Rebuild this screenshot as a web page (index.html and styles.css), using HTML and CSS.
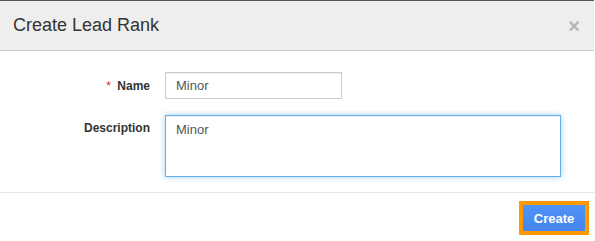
FILE: index.html
```html
<!DOCTYPE html>
<html lang="en">
<head>
    <meta charset="UTF-8">
    <meta name="viewport" content="width=device-width, initial-scale=1.0">
    <title>Create Lead Rank</title>
    <link rel="stylesheet" href="styles.css">
</head>
<body>
    <div class="modal">
        <div class="modal-header">
            <h4 class="modal-title">Create Lead Rank</h4>
            <button class="close" type="button">&times;</button>
        </div>
        <div class="modal-body">
            <div class="form-row">
                <label for="rank-name"><span class="required">*</span> Name</label>
                <input type="text" id="rank-name" class="name-input" value="Minor">
            </div>
            <div class="form-row top">
                <label for="rank-desc">Description</label>
                <textarea id="rank-desc" class="desc-input">Minor</textarea>
            </div>
        </div>
        <div class="modal-footer">
            <button class="create-button" type="button">Create</button>
        </div>
    </div>
</body>
</html>
```

FILE: styles.css
```css
body {
    margin: 0;
    font-family: "Liberation Sans", Arial, sans-serif;
    font-size: 13px;
    color: #333;
    background-color: #fff;
}

.modal {
    border-top: 1px solid #555;
    width: 594px;
}

.modal-header {
    display: flex;
    align-items: center;
    justify-content: space-between;
    height: 49px;
    padding: 0 14px 0 13px;
    background-color: #eee;
    border-bottom: 1px solid #ccc;
}

.modal-title {
    margin: 0;
    font-size: 18px;
    font-weight: normal;
    color: #333;
}

.close {
    padding: 0;
    border: none;
    background: none;
    font-family: "Liberation Sans", Arial, sans-serif;
    font-size: 20px;
    font-weight: bold;
    line-height: 1;
    color: #b5b5b5;
    cursor: pointer;
}

.modal-body {
    padding: 21px 34px 15px 0;
}

.form-row {
    display: grid;
    grid-template-columns: 150px 1fr;
    column-gap: 15px;
    align-items: center;
}

.form-row.top {
    align-items: start;
    margin-top: 16px;
}

.form-row label {
    text-align: right;
    font-size: 12px;
    font-weight: bold;
    color: #333;
}

.form-row.top label {
    padding-top: 6px;
}

.required {
    color: #e02b27;
    margin-right: 3px;
    font-weight: normal;
}

.name-input,
.desc-input {
    box-sizing: border-box;
    padding: 4px 10px;
    font-family: "Liberation Sans", Arial, sans-serif;
    font-size: 13px;
    color: #555;
    background-color: #fff;
    border: 1px solid #ccc;
    border-radius: 0;
    box-shadow: inset 0 1px 1px rgba(0, 0, 0, 0.075);
    outline: none;
}

.name-input {
    width: 177px;
    height: 27px;
}

.desc-input {
    width: 396px;
    height: 62px;
    padding-top: 6px;
    resize: none;
    border-color: #66afe9;
    box-shadow: inset 0 1px 1px rgba(0, 0, 0, 0.075), 0 0 6px rgba(102, 175, 233, 0.6);
}

.modal-footer {
    display: flex;
    justify-content: flex-end;
    padding: 12px 9px 10px 0;
    border-top: 1px solid #e5e5e5;
}

.create-button {
    width: 62px;
    height: 26px;
    padding: 0;
    font-family: "Liberation Sans", Arial, sans-serif;
    font-size: 13px;
    font-weight: bold;
    color: #fff;
    background: linear-gradient(#5093f7, #4585ee);
    border: none;
    outline: 4px solid #ff9900;
    cursor: pointer;
}
```
